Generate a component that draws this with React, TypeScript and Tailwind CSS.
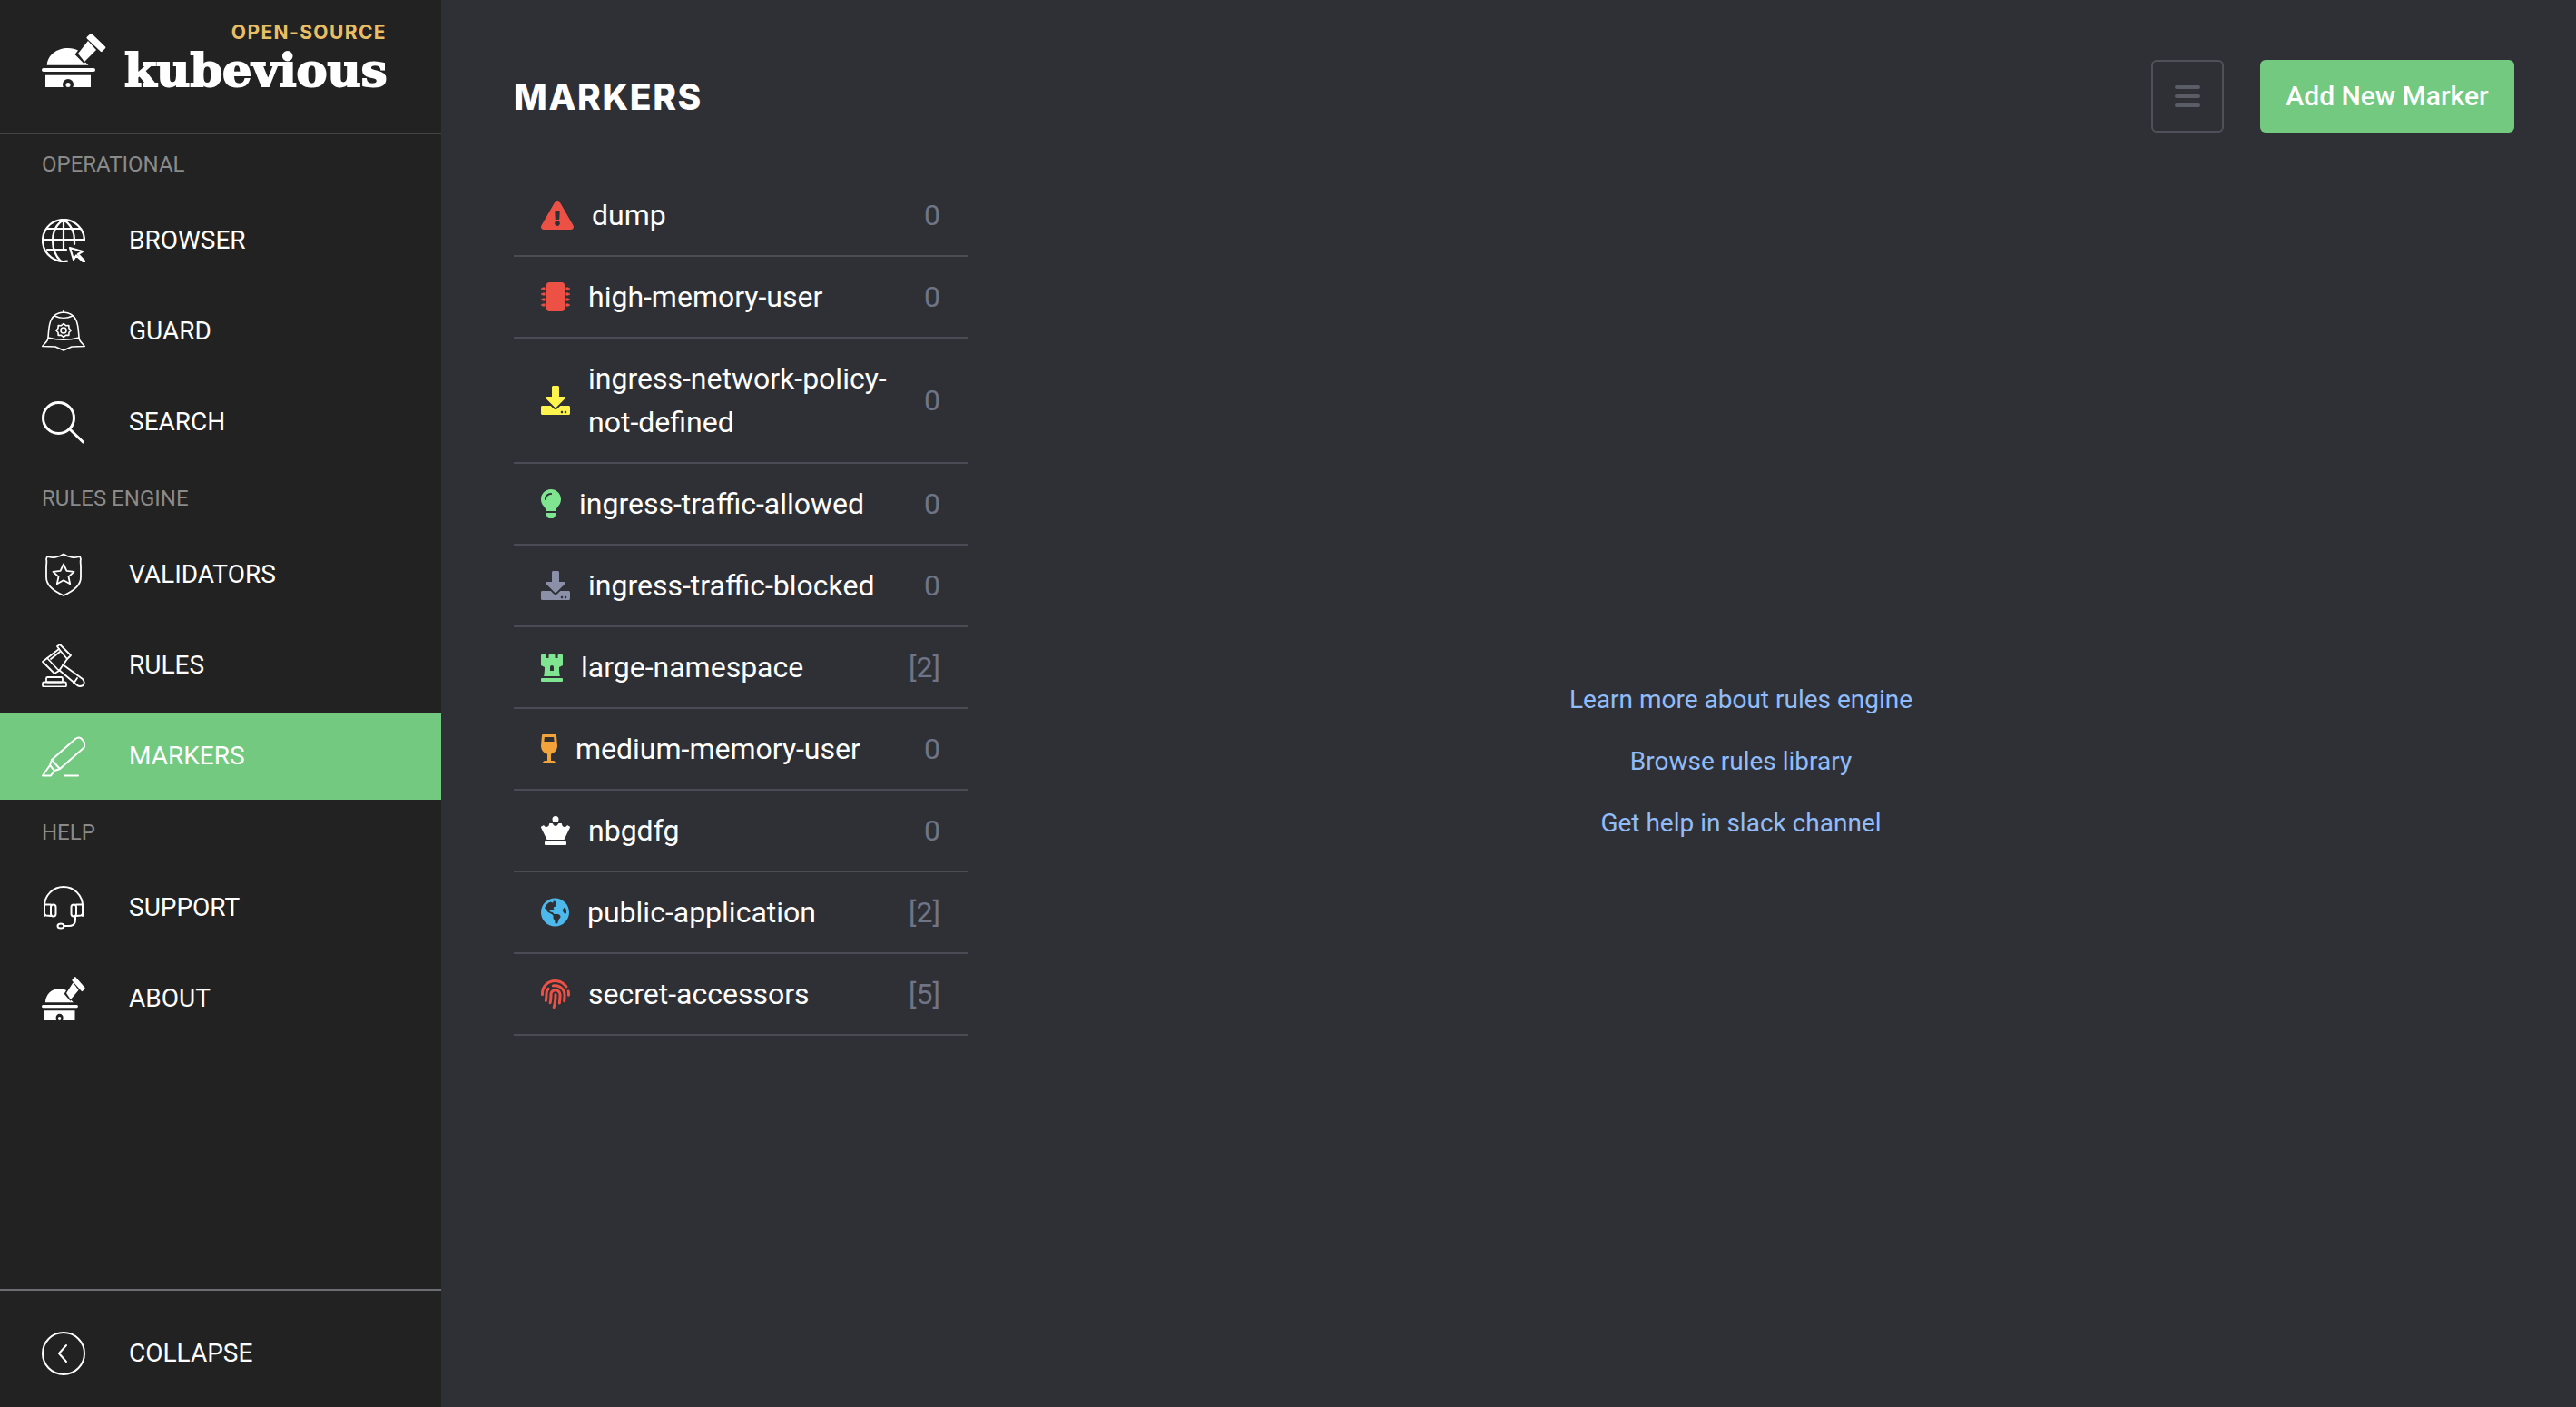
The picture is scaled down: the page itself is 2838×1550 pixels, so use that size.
import React from "react";
import {
  FaExclamationTriangle,
  FaMicrochip,
  FaDownload,
  FaLightbulb,
  FaChessRook,
  FaWineGlassAlt,
  FaChessQueen,
  FaGlobeAmericas,
  FaFingerprint,
} from "react-icons/fa";

type SvgProps = { className?: string };

const Logo = ({ className }: SvgProps) => (
  <svg viewBox="0 0 71 59" preserveAspectRatio="none" className={className} fill="#fff">
    <path d="M5.7 34.7C6.5 24 16 16 29 16c4.500 0 8 1 11 2.500l-3.500 4.500 10 10 1.500-1.500 3.500 3.200Z" />
    <path d="M40 22 51 8l9 10-13 13Z" />
    <path d="M50 3.500 53 .8a2 2 0 0 1 2.800 0l14 13.400a1.500 1.500 0 0 1 0 2.200l-3 3a1.500 1.500 0 0 1-2.200 0L50 5.700a1.500 1.500 0 0 1 0-2.200Z" />
    <rect x="0" y="38" width="59" height="4" rx="2" />
    <path d="M4 45.700h50V59H4Z" />
    <circle cx="29" cy="56" r="6" fill="#222" />
    <circle cx="29" cy="56.500" r="2.500" />
  </svg>
);

const Line = ({ className, children, w = 2 }: SvgProps & { children: React.ReactNode; w?: number }) => (
  <svg viewBox="0 0 48 48" className={className} fill="none" stroke="#fff" strokeWidth={w} strokeLinecap="round" strokeLinejoin="round">
    {children}
  </svg>
);

const IconClass = "h-12 w-12 shrink-0";

const BrowserIcon = () => (
  <Line className={IconClass} w={2.200}>
    <path d="M47 24A23 23 0 1 0 28 46.600" />
    <path d="M1 23H47M6 11H42M6 34H27" />
    <path d="M24 1V34M24 1C15 7 12 15 12 24C12 33 15 41 21 46.800M24 1C33 7 36 15 36 24V28" />
    <path d="M31 32L45 36L40 39L47.500 47L46 47.500L38 40.500L35 45Z" />
  </Line>
);

const GuardIcon = () => (
  <Line className={IconClass} w={1.600}>
    <path d="M7 31C8 20 7 4 24 3C41 4 40 20 41 31" />
    <path d="M7 31C7 35 3 37 .8 40.500L15 41L24 45L33 41L47.200 40.500C45 37 41 35 41 31C30 34 18 34 7 31Z" />
    <path d="M14 7C20 10 28 10 34 7M24 3V.5" />
    <circle cx="24" cy="23" r="3" />
    <path d="M24 15.500l2.500 2.200 3.300-.1.200 3.200 2.200 2.200-2.200 2.200-.2 3.200-3.300-.1-2.500 2.200-2.500-2.200-3.300.1-.2-3.200-2.200-2.200 2.200-2.200.2-3.200 3.300.1Z" />
  </Line>
);

const SearchIcon = () => (
  <Line className={IconClass} w={3}>
    <circle cx="18.500" cy="19.500" r="17" />
    <path d="M31 32L45.500 46" />
  </Line>
);

const ValidatorsIcon = () => (
  <Line className={IconClass} w={1.800}>
    <path d="M6 4C11 6 19 5 24 1.500C29 5 37 6 42 4L43 7C42 10 43 12 43 15V27C43 37 33 43 24 47C15 43 5 37 5 27V15C5 12 6 10 5 7Z" />
    <path d="M24 12.500l3.400 7.400 8.100.9-6 5.500 1.700 8-7.200-4-7.200 4 1.700-8-6-5.500 8.100-.9Z" />
  </Line>
);

const RulesIcon = () => (
  <Line className={IconClass} w={1.800}>
    <path d="M1 20L6 16L19 30L14 33Z" />
    <path d="M6 16L19 6L28 17L19 30" />
    <path d="M19 6L17 3L20 1L32 13L29.500 15.500L28 17" />
    <path d="M10 17L20 9" />
    <path d="M23 23L45 39C48 42 47 47 42 47C40 47 39 46 38 45L19 29" />
    <path d="M39 38L35 44" />
    <rect x="5" y="37" width="18" height="5.500" rx="1.500" />
    <rect x="1" y="42.500" width="26" height="5" rx="1.500" />
  </Line>
);

const MarkersIcon = () => (
  <Line className={IconClass} w={2}>
    <path d="M11 28L37 5Q41 2 44 5L47 9Q49 12 46 15L20 38Z" />
    <path d="M11 28L9 34L14 40L20 38" />
    <path d="M9 34L1 45.500H10L14 40" />
    <path d="M25 45.500H40" />
  </Line>
);

const SupportIcon = () => (
  <Line className={IconClass} w={2}>
    <path d="M3 33V22A21 21 0 0 1 45 22V33" />
    <path d="M10 20.500H3V30Q3 32 5 32.500L10 33" />
    <rect x="10" y="20.500" width="5.500" height="13" rx="2.700" />
    <path d="M38 20.500H45V30Q45 32 43 32.500L38 33" />
    <rect x="32.500" y="20.500" width="5.500" height="13" rx="2.700" />
    <path d="M37 33.500V37Q37 44 30 44H24" />
    <ellipse cx="21" cy="44" rx="3.500" ry="2.500" />
  </Line>
);

const CollapseIcon = () => (
  <Line className={IconClass} w={2}>
    <circle cx="24" cy="24" r="23" />
    <path d="M27 15L19 24L27 33" />
  </Line>
);

const NavItem = ({ icon, label, active }: { icon: React.ReactNode; label: string; active?: boolean }) => (
  <div className={`flex h-24 items-center pl-[46px] ${active ? "bg-[#72c97f]" : ""}`}>
    {icon}
    <span className="ml-[48px] text-[28px] leading-none text-white">{label}</span>
  </div>
);

const SectionLabel = ({ label, className }: { label: string; className: string }) => (
  <div className={`flex items-center pl-[46px] text-[24px] leading-none text-[#8a8a8a] ${className}`}>{label}</div>
);

const markers = [
  { name: "dump", count: "0", Icon: FaExclamationTriangle, color: "w-9 text-[#ed5045]" },
  { name: "high-memory-user", count: "0", Icon: FaMicrochip, color: "w-8 text-[#ed5045]" },
  { name: "ingress-network-policy-not-defined", count: "0", Icon: FaDownload, color: "w-8 text-[#fff44d]" },
  { name: "ingress-traffic-allowed", count: "0", Icon: FaLightbulb, color: "w-[22px] text-[#7fe590]" },
  { name: "ingress-traffic-blocked", count: "0", Icon: FaDownload, color: "w-8 text-[#8b8fa8]" },
  { name: "large-namespace", count: "[2]", Icon: FaChessRook, color: "w-6 text-[#7fe590]" },
  { name: "medium-memory-user", count: "0", Icon: FaWineGlassAlt, color: "w-[18px] text-[#f2a33a]" },
  { name: "nbgdfg", count: "0", Icon: FaChessQueen, color: "w-8 text-white" },
  { name: "public-application", count: "[2]", Icon: FaGlobeAmericas, color: "w-[31px] text-[#4db8ec]" },
  { name: "secret-accessors", count: "[5]", Icon: FaFingerprint, color: "w-8 text-[#ed5045]" },
];

export default function App() {
  return (
    <div className="flex h-screen w-full overflow-hidden bg-[#2f3035] font-['Roboto',sans-serif] antialiased">
      <aside className="flex w-[486px] shrink-0 flex-col bg-[#222222]">
        <div className="flex h-[148px] shrink-0 items-start border-b-2 border-[#444444] pl-[46px] pt-[24px]">
          <Logo className="mt-[13px] h-[59px] w-[71px] shrink-0" />
          <div className="ml-[20px] w-[289px] text-right">
            <div className="font-['Inter',sans-serif] text-[21px] font-bold leading-[24px] tracking-[1.4px] text-[#e9bf66]">OPEN-SOURCE</div>
            <div className="mt-[1px] text-left font-['DejaVu_Serif',serif] text-[51px] font-bold leading-[56px] text-white [-webkit-text-stroke:2px_white]">
              kubevious
            </div>
          </div>
        </div>
        <SectionLabel label="OPERATIONAL" className="h-[69px] pb-[3px]" />
        <nav className="flex flex-col gap-1">
          <NavItem icon={<BrowserIcon />} label="BROWSER" />
          <NavItem icon={<GuardIcon />} label="GUARD" />
          <NavItem icon={<SearchIcon />} label="SEARCH" />
        </nav>
        <SectionLabel label="RULES ENGINE" className="h-[72px]" />
        <nav className="flex flex-col gap-1">
          <NavItem icon={<ValidatorsIcon />} label="VALIDATORS" />
          <NavItem icon={<RulesIcon />} label="RULES" />
          <NavItem icon={<MarkersIcon />} label="MARKERS" active />
        </nav>
        <SectionLabel label="HELP" className="h-[71px]" />
        <nav className="flex flex-col gap-1">
          <NavItem icon={<SupportIcon />} label="SUPPORT" />
          <NavItem icon={<Logo className="h-12 w-12 shrink-0" />} label="ABOUT" />
        </nav>
        <div className="mt-auto flex h-[130px] shrink-0 items-center border-t-2 border-[#6b6d70] pl-[46px] pt-[10px]">
          <CollapseIcon />
          <span className="ml-[48px] text-[28px] leading-none text-white">COLLAPSE</span>
        </div>
      </aside>

      <main className="flex min-w-0 flex-1 flex-col pl-[80px] pr-[68px]">
        <header className="flex h-[146px] shrink-0 items-end">
          <div className="flex h-[80px] w-full items-center">
            <h1 className="font-['Inter',sans-serif] text-[39px] font-extrabold leading-none tracking-[1.6px] text-white">MARKERS</h1>
            <button className="ml-auto flex h-20 w-20 flex-col items-center justify-center gap-[6px] rounded-md border-2 border-[#4f505a]">
              <span className="h-1 w-7 rounded-sm bg-[#5a5c66]" />
              <span className="h-1 w-7 rounded-sm bg-[#5a5c66]" />
              <span className="h-1 w-7 rounded-sm bg-[#5a5c66]" />
            </button>
            <button className="ml-10 flex h-20 w-[280px] items-center justify-center rounded-md bg-[#72c97f] text-[30px] font-medium leading-none text-white">
              Add New Marker
            </button>
          </div>
        </header>
        <div className="flex min-h-0 flex-1">
          <ul className="mt-[47px] w-[500px] shrink-0">
            {markers.map(({ name, count, Icon, color }) => (
              <li key={name} className="flex items-center border-b-2 border-[#4a4b55] py-5 pl-[30px] pr-[30px] text-[32px] leading-[48px]">
                <Icon className={`h-8 shrink-0 ${color}`} />
                <span className="ml-5 min-w-0 flex-1 text-white">{name}</span>
                <span className="ml-4 shrink-0 text-[#6f7486]">{count}</span>
              </li>
            ))}
          </ul>
          <div className="flex flex-1 flex-col items-center justify-center gap-[34px] pb-[18px] text-[28px] leading-[34px] text-[#90bdf9]">
            <a>Learn more about rules engine</a>
            <a>Browse rules library</a>
            <a>Get help in slack channel</a>
          </div>
        </div>
      </main>
    </div>
  );
}
